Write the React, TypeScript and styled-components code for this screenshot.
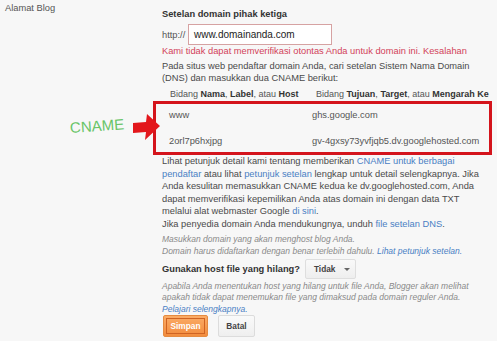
import React from "react";
import styled, { createGlobalStyle } from "styled-components";

const Global = createGlobalStyle`
  html, body { margin: 0; padding: 0; background: #f7f7f7; }
  body { font-family: "Liberation Sans", Arial, sans-serif; }
`;

const Page = styled.div`
  position: relative;
  width: 497px;
  height: 341px;
  display: flex;
  overflow: hidden;
  font-size: 9.3px;
  color: #4a4a4a;
`;

const LabelCol = styled.div`
  width: 157px;
  padding: 2px 0 0 5px;
  line-height: 12.5px;
  color: #555;
`;

const Content = styled.div`
  width: 335px;
  padding-top: 8px;
  display: flex;
  flex-direction: column;
`;

const Heading = styled.div`
  font-weight: bold;
  color: #333;
  line-height: 12.5px;
`;

const HttpRow = styled.div`
  margin-top: 3.5px;
  display: flex;
  align-items: center;
  gap: 5px;
  color: #555;
`;

const Prefix = styled.span`
  width: 21px;
`;

const DomainInput = styled.div`
  box-sizing: border-box;
  width: 144px;
  height: 21px;
  border: 1px solid #d6a2a2;
  background: #fff;
  padding-left: 5px;
  display: flex;
  align-items: center;
  font-size: 10px;
  color: #222;
`;

const ErrorText = styled.div`
  color: #d2435a;
  line-height: 12.5px;
  white-space: nowrap;
`;

const Para = styled.div<{ $mt?: number; $lh?: number }>`
  margin-top: ${(p) => p.$mt ?? 0}px;
  line-height: ${(p) => p.$lh ?? 12.5}px;
  white-space: nowrap;
  color: #4a4a4a;
`;

const Hint = styled.div<{ $mt?: number; $lh?: number }>`
  margin-top: ${(p) => p.$mt ?? 0}px;
  line-height: ${(p) => p.$lh ?? 12}px;
  font-size: 8.5px;
  font-style: italic;
  color: #8a8a8a;
  white-space: nowrap;
`;

const Link = styled.span`
  color: #4a80c4;
`;

const TableHead = styled.div`
  margin-top: 3px;
  display: grid;
  grid-template-columns: 146px 1fr;
  padding-left: 8px;
  line-height: 12.5px;
  font-size: 9px;
  white-space: nowrap;
  color: #555;
  b { color: #333; }
`;

const RecordBox = styled.div`
  box-sizing: border-box;
  margin-top: 1px;
  margin-left: -9px;
  width: 339px;
  height: 54px;
  border: 3px solid #d4141c;
  padding: 5px 0 0 13px;
  display: grid;
  grid-template-columns: 143px 1fr;
  row-gap: 13.5px;
  align-content: start;
  line-height: 12.5px;
  color: #555;
  white-space: nowrap;
`;

const HostRow = styled.div`
  margin-top: 1.5px;
  height: 22px;
  display: flex;
  align-items: center;
  gap: 5px;
`;

const HostLabel = styled.span`
  font-weight: bold;
  color: #333;
`;

const Dropdown = styled.div`
  box-sizing: border-box;
  width: 51px;
  height: 20px;
  border: 1px solid #dedede;
  border-radius: 2px;
  background: linear-gradient(#f9f9f9, #eeeeee);
  display: flex;
  align-items: center;
  padding-left: 8px;
  gap: 9px;
  font-size: 8.3px;
  font-weight: bold;
  color: #444;
`;

const Caret = styled.span`
  width: 0;
  height: 0;
  border-left: 3px solid transparent;
  border-right: 3px solid transparent;
  border-top: 3px solid #666;
`;

const Buttons = styled.div`
  display: flex;
  gap: 10px;
  margin-left: 1px;
`;

const SaveButton = styled.div`
  box-sizing: border-box;
  width: 45px;
  height: 22px;
  border: 1px solid #e58b40;
  border-radius: 2px;
  background: linear-gradient(#fbac66, #f28c3e);
  padding: 2px;
  display: flex;
`;

const SaveInner = styled.span`
  flex: 1;
  border: 1px solid #cf6322;
  display: flex;
  align-items: center;
  justify-content: center;
  color: #fff;
  font-weight: bold;
  font-size: 8.3px;
`;

const CancelButton = styled.div`
  box-sizing: border-box;
  width: 37px;
  height: 22px;
  border: 1px solid #dcdcdc;
  border-radius: 2px;
  background: linear-gradient(#fafafa, #efefef);
  display: flex;
  align-items: center;
  justify-content: center;
  font-weight: bold;
  font-size: 8.3px;
  color: #444;
`;

const Annotation = styled.div`
  position: absolute;
  left: 70px;
  top: 119px;
  font-size: 15px;
  line-height: 18px;
  color: #66c466;
  transform: rotate(-4deg);
  transform-origin: left center;
`;

const ArrowSvg = styled.svg`
  position: absolute;
  left: 132px;
  top: 110px;
`;

export default function App() {
  return (
    <Page>
      <Global />
      <LabelCol>Alamat Blog</LabelCol>
      <Content>
        <Heading>Setelan domain pihak ketiga</Heading>
        <HttpRow>
          <Prefix>http://</Prefix>
          <DomainInput>www.domainanda.com</DomainInput>
        </HttpRow>
        <ErrorText>
          Kami tidak dapat memverifikasi otontas Anda untuk domain ini. Kesalahan
        </ErrorText>
        <Para $mt={2}>
          Pada situs web pendaftar domain Anda, cari setelan Sistem Nama Domain
          <br />
          (DNS) dan masukkan dua CNAME berikut:
        </Para>
        <TableHead>
          <span>
            Bidang <b>Nama</b>, <b>Label</b>, atau <b>Host</b>
          </span>
          <span>
            Bidang <b>Tujuan</b>, <b>Target</b>, atau <b>Mengarah Ke</b>
          </span>
        </TableHead>
        <RecordBox>
          <span>www</span>
          <span>ghs.google.com</span>
          <span>2orl7p6hxjpg</span>
          <span>gv-4gxsy73yvfjqb5.dv.googlehosted.com</span>
        </RecordBox>
        <Para $lh={12.6}>
          Lihat petunjuk detail kami tentang memberikan{" "}
          <Link>CNAME untuk berbagai</Link>
          <br />
          <Link>pendaftar</Link> atau lihat <Link>petunjuk setelan</Link> lengkap
          untuk detail selengkapnya. Jika
          <br />
          Anda kesulitan memasukkan CNAME kedua ke dv.googlehosted.com, Anda
          <br />
          dapat memverifikasi kepemilikan Anda atas domain ini dengan data TXT
          <br />
          melalui alat webmaster Google <Link>di sini</Link>.
          <br />
          Jika penyedia domain Anda mendukungnya, unduh{" "}
          <Link>file setelan DNS</Link>.
        </Para>
        <Hint $mt={2}>
          Masukkan domain yang akan menghost blog Anda.
          <br />
          Domain harus didaftarkan dengan benar terlebih dahulu.{" "}
          <Link>Lihat petunjuk setelan.</Link>
        </Hint>
        <HostRow>
          <HostLabel>Gunakan host file yang hilang?</HostLabel>
          <Dropdown>
            Tidak <Caret />
          </Dropdown>
        </HostRow>
        <Hint $mt={1} $lh={11.3}>
          Apabila Anda menentukan host yang hilang untuk file Anda, Blogger akan
          melihat
          <br />
          apakah tidak dapat menemukan file yang dimaksud pada domain reguler
          Anda.
          <br />
          <Link>Pelajari selengkapnya.</Link>
        </Hint>
        <Buttons>
          <SaveButton>
            <SaveInner>Simpan</SaveInner>
          </SaveButton>
          <CancelButton>Batal</CancelButton>
        </Buttons>
      </Content>
      <Annotation>CNAME</Annotation>
      <ArrowSvg width="30" height="34" viewBox="0 0 30 34">
        <polygon
          points="1,13 14,12 15,4 28,16 13,30 14,22 1,23"
          fill="#e3171c"
        />
      </ArrowSvg>
    </Page>
  );
}
